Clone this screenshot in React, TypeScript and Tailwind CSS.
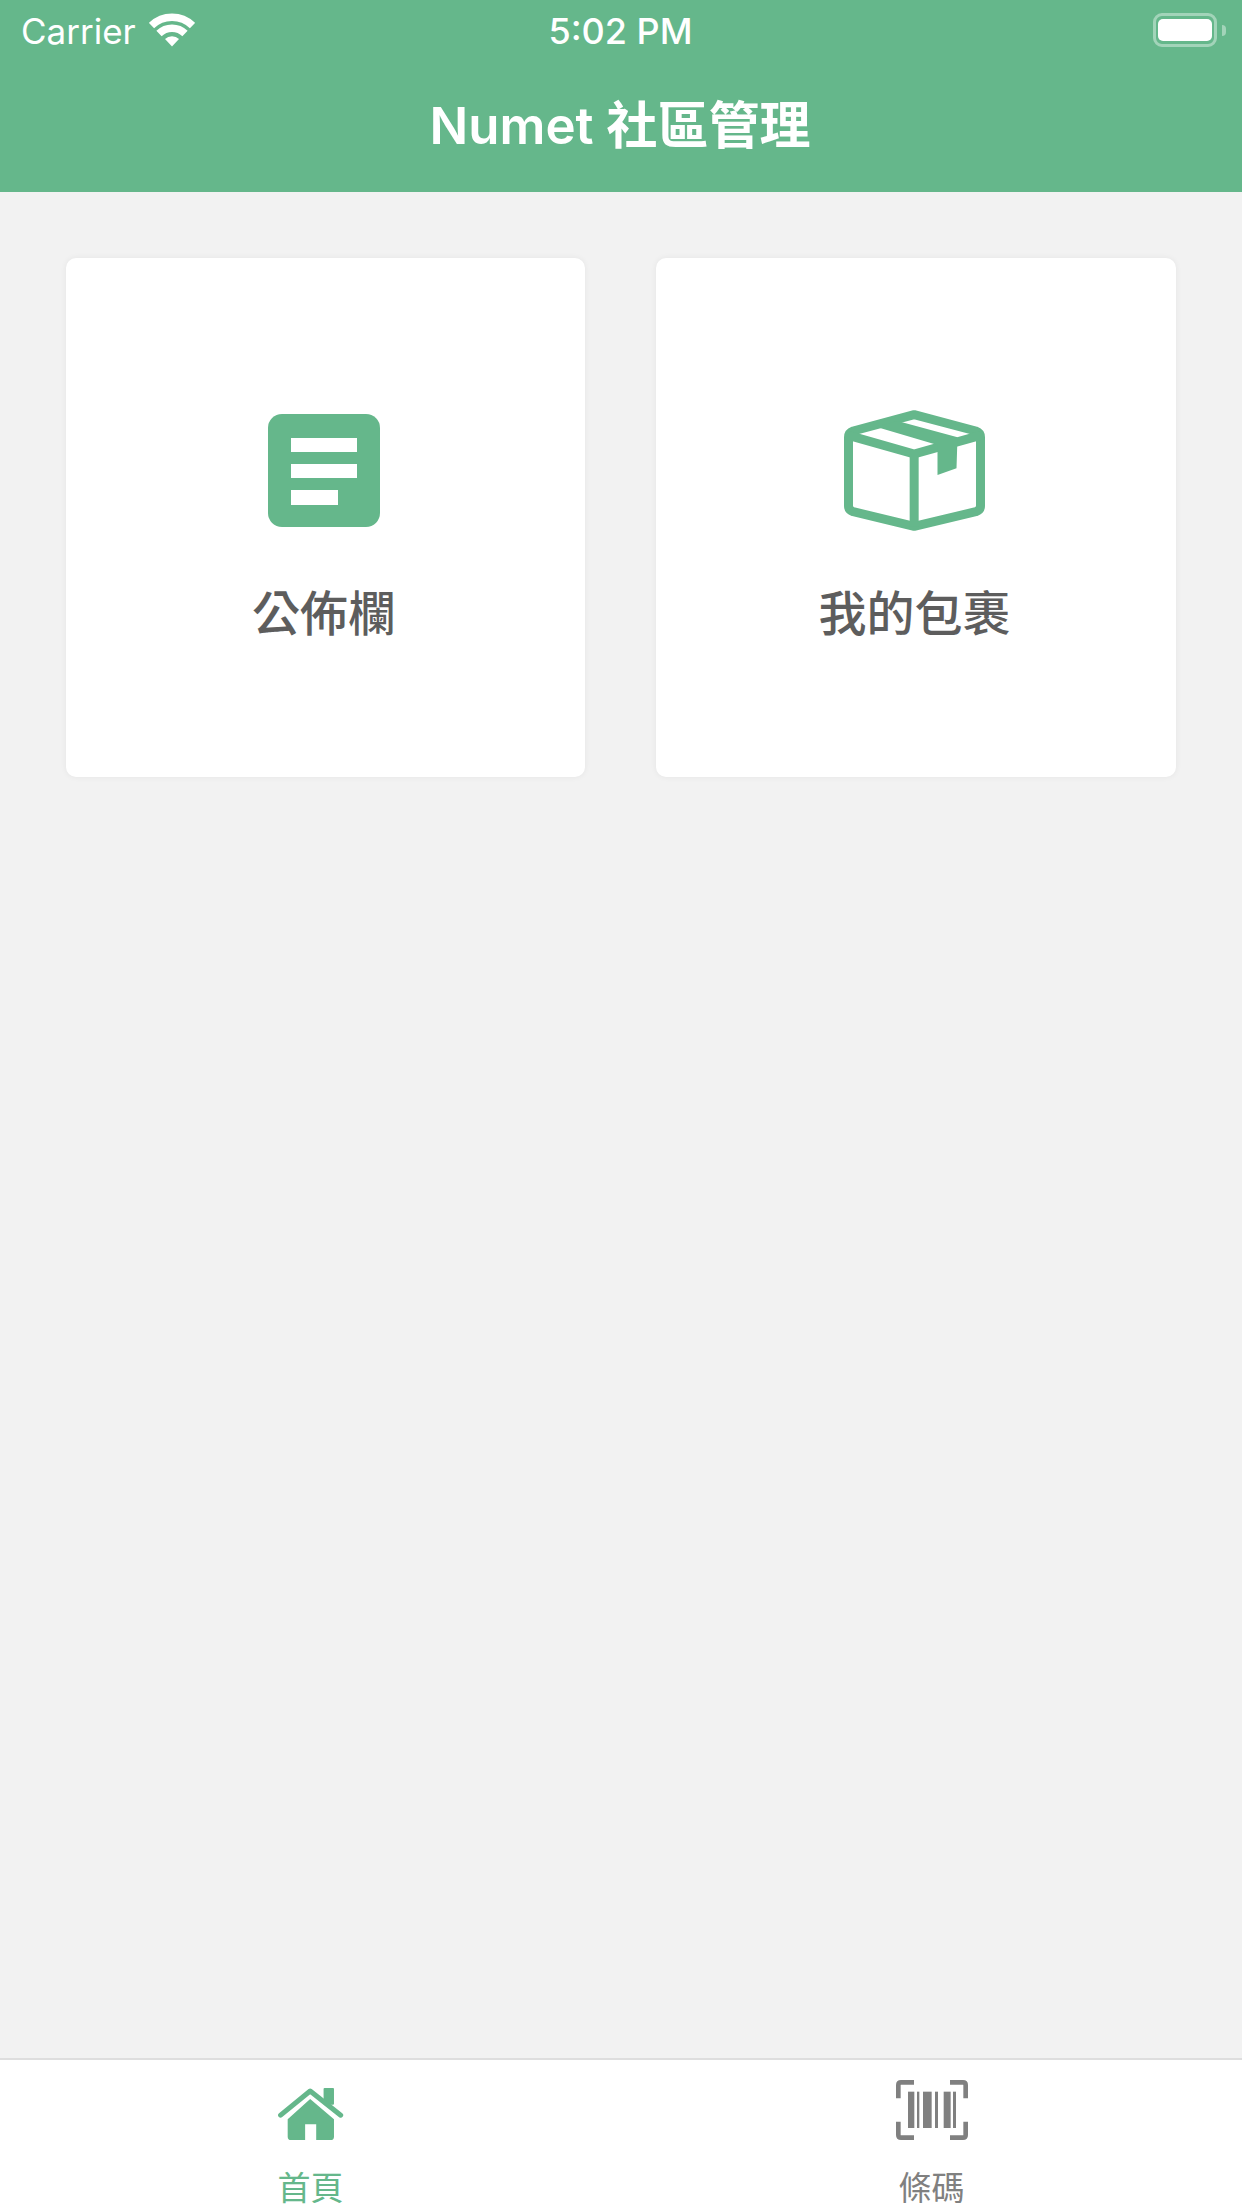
const GREEN = "#65b78b";

function WifiIcon() {
  return (
    <svg aria-hidden width="46" height="34" viewBox="0 0 46 34" fill="none" stroke="white">
      <path d="M2.5 12.5 A29.5 29.5 0 0 1 43.5 12.5" strokeWidth="7.5" />
      <path d="M10 20.5 A18.5 18.5 0 0 1 36 20.5" strokeWidth="7.5" />
      <path d="M16 26 A10 10 0 0 1 30 26 L23 33.5 Z" fill="white" stroke="none" />
    </svg>
  );
}

function BatteryIcon() {
  return (
    <div className="flex items-center gap-[5px]">
      <div className="flex h-[34px] w-[64px] items-center justify-center rounded-[9px] border-[3px] border-white/40">
        <div className="h-[22px] w-[54px] rounded-[5px] bg-white" />
      </div>
      <div className="h-[11px] w-[4px] rounded-r-full bg-white/40" />
    </div>
  );
}

function BoardIcon() {
  return (
    <div className="flex h-[113px] w-[112px] flex-col gap-[12px] rounded-[14px] bg-[#65b78b] pl-[23px] pt-[24px]">
      <div className="h-[14px] w-[66px] bg-white" />
      <div className="h-[14px] w-[66px] bg-white" />
      <div className="h-[15px] w-[47px] bg-white" />
    </div>
  );
}

function BoxIcon() {
  return (
    <svg aria-hidden width="141" height="121" viewBox="195 90 422 363" fill="none" stroke={GREEN} strokeWidth="27" strokeLinejoin="round">
      <path d="M405 104 L590 153 Q604 158 604 172 V378 Q604 390 590 395 L405 439 L222 395 Q208 390 208 378 V172 Q208 158 222 153 Z" />
      <path d="M208 166 L405 222 L604 166" />
      <path d="M405 222 V439" />
      <path d="M290 140 L355 123 L535 172 L532 265 L475 285 L475 195 Z" fill={GREEN} stroke="none" />
    </svg>
  );
}

function HomeIcon() {
  return (
    <svg aria-hidden width="66" height="52" viewBox="175 145 195 155" fill={GREEN}>
      <rect x="310" y="145" width="31" height="50" rx="3" />
      <path d="M182 226 L270 154 L361 226" fill="none" stroke={GREEN} strokeWidth="15" strokeLinecap="round" strokeLinejoin="round" />
      <path fillRule="evenodd" d="M203 238 L270 178 L341 238 V290 Q341 300 331 300 H288 V253 H255 V300 H213 Q203 300 203 290 Z" />
    </svg>
  );
}

function BarcodeIcon() {
  return (
    <svg aria-hidden width="72" height="60" viewBox="138 120 216 180" fill="#808080">
      <path d="M145 175 V135 Q145 127 153 127 H192" fill="none" stroke="#808080" strokeWidth="14" />
      <path d="M300 127 H339 Q347 127 347 135 V175" fill="none" stroke="#808080" strokeWidth="14" />
      <path d="M145 245 V285 Q145 293 153 293 H192" fill="none" stroke="#808080" strokeWidth="14" />
      <path d="M300 293 H339 Q347 293 347 285 V245" fill="none" stroke="#808080" strokeWidth="14" />
      <rect x="174" y="155" width="19" height="109" />
      <rect x="201" y="155" width="7" height="109" />
      <rect x="219" y="155" width="26" height="109" />
      <rect x="255" y="155" width="9" height="109" />
      <rect x="281" y="155" width="21" height="109" />
      <rect x="309" y="155" width="9" height="109" />
    </svg>
  );
}

function MenuCard({ icon, label }: { icon: React.ReactNode; label: string }) {
  return (
    <div className="flex h-[519px] flex-col items-center rounded-[10px] bg-white pr-[3px] shadow-[0_0_6px_rgba(0,0,0,0.06)]">
      <div className="mt-[152px] flex h-[120px] items-center justify-center">{icon}</div>
      <p className="mt-[50px] text-[48px] leading-[68px] font-medium text-[#5d5d5d]">{label}</p>
    </div>
  );
}

export default function App() {
  return (
    <div className="flex h-[2208px] w-[1242px] flex-col overflow-hidden bg-[#f2f2f2] font-['Inter','Noto_Sans_CJK_TC',sans-serif]">
      <header className="h-[192px] shrink-0 bg-[#65b78b] text-white">
        <div className="grid h-[60px] grid-cols-3 items-center pl-[21px] pr-[16px]">
          <div className="flex items-center gap-[13px]">
            <span className="pt-[2px] text-[35px] leading-none">Carrier</span>
            <WifiIcon />
          </div>
          <span className="pr-[6px] pt-[2px] text-center text-[36px] leading-none font-medium">5:02 PM</span>
          <div className="flex justify-end">
            <BatteryIcon />
          </div>
        </div>
        <h1 className="flex h-[132px] items-center justify-center pr-[2px] text-[51px] font-semibold">Numet 社區管理</h1>
      </header>

      <main className="grid flex-1 grid-cols-[519px_520px] content-start gap-[71px] px-[66px] pt-[66px]">
        <MenuCard icon={<BoardIcon />} label="公佈欄" />
        <MenuCard icon={<BoxIcon />} label="我的包裹" />
      </main>

      <nav className="grid h-[150px] shrink-0 grid-cols-2 border-t-2 border-[#dedede] bg-white">
        <div className="flex flex-col items-center pt-[28px]">
          <HomeIcon />
          <span className="mt-[25px] text-[33px] leading-[46px] text-[#65b78b]">首頁</span>
        </div>
        <div className="flex flex-col items-center pt-[20px]">
          <BarcodeIcon />
          <span className="mt-[25px] text-[33px] leading-[46px] text-[#808080]">條碼</span>
        </div>
      </nav>
    </div>
  );
}
